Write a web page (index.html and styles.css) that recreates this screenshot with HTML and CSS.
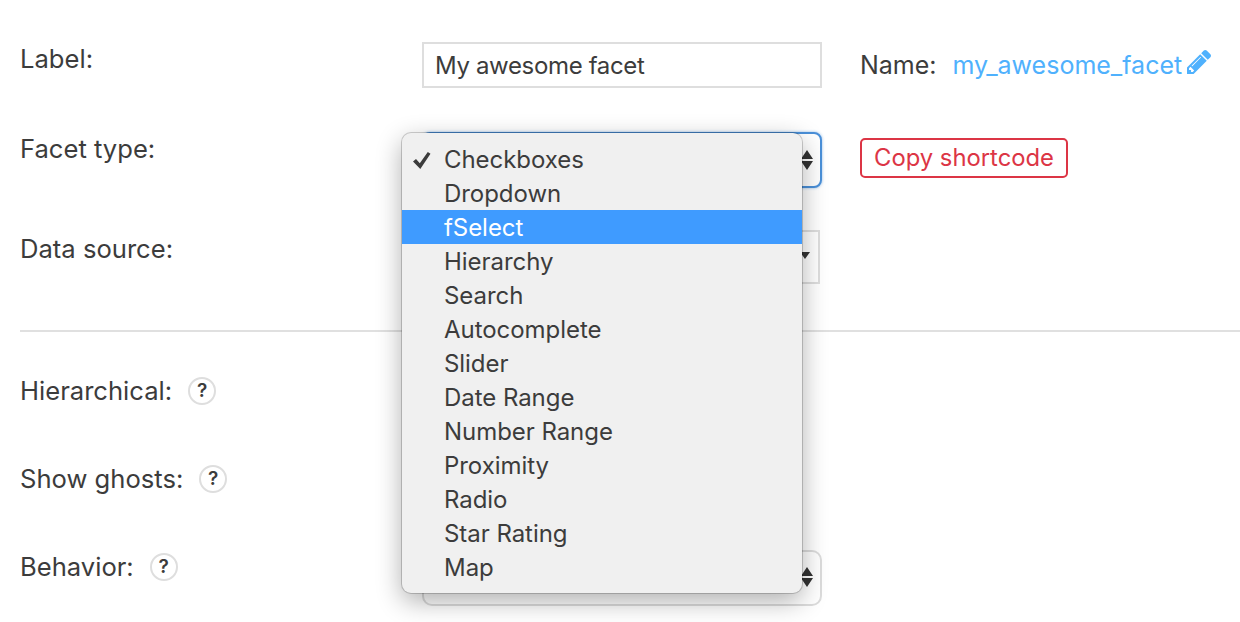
FILE: index.html
```html
<!DOCTYPE html>
<html lang="en">
<head>
<meta charset="utf-8">
<title>Facet settings</title>
<link rel="stylesheet" href="styles.css">
</head>
<body>
<main class="page">
  <section class="group group-top">
    <div class="row row-label">
      <div class="label">Label:</div>
      <div class="input">My awesome facet</div>
      <div class="side side-name">
        <span>Name:</span>
        <a class="name-link">my_awesome_facet</a>
        <svg class="pencil" viewBox="128 149 1515 1515" aria-hidden="true"><path d="M491 1536l91-91-235-235-91 91v107h128v128h107zm523-928q0-22-22-22-10 0-17 7l-542 542q-7 7-7 17 0 22 22 22 10 0 17-7l542-542q7-7 7-17zm-54-192l416 416-832 832h-416v-416zm683 96q0 53-37 90l-166 166-416-416 166-165q36-38 90-38 53 0 91 38l235 234q37 39 37 91z"/></svg>
      </div>
    </div>
    <div class="row row-type">
      <div class="label">Facet type:</div>
      <div class="select select-focus">
        <svg class="updown" viewBox="0 0 12 20" aria-hidden="true"><path d="M6 0l6 9h-12zM0 11h12l-6 9z"/></svg>
      </div>
      <div class="side side-copy"><button class="copy">Copy shortcode</button></div>
    </div>
    <div class="row row-source">
      <div class="label label-source">Data source:</div>
      <div class="select-flat"><span class="caret"></span></div>
    </div>
  </section>
  <hr class="divider">
  <section class="group">
    <div class="row row-opt">
      <div class="label label-help">Hierarchical:<span class="help">?</span></div>
    </div>
    <div class="row row-opt">
      <div class="label label-help">Show ghosts:<span class="help">?</span></div>
    </div>
    <div class="row row-opt">
      <div class="label label-help">Behavior:<span class="help">?</span></div>
      <div class="select select-plain">
        <svg class="updown" viewBox="0 0 12 20" aria-hidden="true"><path d="M6 0l6 9h-12zM0 11h12l-6 9z"/></svg>
      </div>
    </div>
  </section>
  <ul class="menu">
    <li class="item checked"><svg class="check" viewBox="0 0 18 17" aria-hidden="true"><path d="M0 9.500l3-2.400 3.800 4.100L14.800 0l2.700 1.700L7.300 17z"/></svg>Checkboxes</li>
    <li class="item">Dropdown</li>
    <li class="item active">fSelect</li>
    <li class="item">Hierarchy</li>
    <li class="item">Search</li>
    <li class="item">Autocomplete</li>
    <li class="item">Slider</li>
    <li class="item">Date Range</li>
    <li class="item">Number Range</li>
    <li class="item">Proximity</li>
    <li class="item">Radio</li>
    <li class="item">Star Rating</li>
    <li class="item">Map</li>
  </ul>
</main>
</body>
</html>
```
FILE: styles.css
```css
* { box-sizing: border-box; }
html, body { margin: 0; height: 100%; background: #fff; overflow: hidden; }
body { font-family: Inter, "Liberation Sans", Arial, sans-serif; font-size: 24px; color: #3c3c3c; }
.page { position: relative; height: 622px; padding-top: 42px; }
.group { padding-left: 20px; }
.row { display: flex; align-items: flex-start; }
.label { width: 402px; flex: none; font-size: 25.6px; line-height: 34px; }
.label-source { padding-top: 2px; }
.label-help { display: flex; align-items: center; }
.row-label { height: 46px; }
.row-type { height: 56px; margin-top: 44px; }
.row-source { height: 54px; margin-top: 42px; }
.row-opt { height: 34px; margin-top: 54px; }
.row-opt:first-child { margin-top: 0; }
.row-opt:last-child { height: 56px; }
.row-opt:last-child .label { height: 34px; }
.input { width: 400px; height: 46px; line-height: 43px; padding-left: 11px; border: 2px solid #dedede; letter-spacing: -0.35px; }
.side { margin-left: 38px; }
.side-name { display: flex; align-items: flex-start; font-size: 25px; line-height: 47px; white-space: nowrap; }
.name-link { margin-left: 16px; color: #4fb1fd; }
.pencil { width: 24px; height: 24px; margin: 8px 0 0 5px; fill: #4fb1fd; }
.select { position: relative; width: 400px; height: 56px; background: #fff; }
.select-focus { border: 2px solid #4a90d9; border-radius: 8px; box-shadow: 0 0 3px rgba(74,144,217,.6); }
.select-plain { border: 2px solid #dcdcdc; border-radius: 10px; }
.updown { position: absolute; right: 7px; top: 16px; width: 12px; height: 20px; fill: #333; }
.select-plain .updown { top: 15px; }
.select-flat { position: relative; width: 398px; height: 54px; border: 2px solid #dedede; }
.caret { position: absolute; right: 8px; top: 20px; border: 5px solid transparent; border-top: 7px solid #333; border-bottom: 0; }
.side-copy { margin-top: 6px; }
.copy { display: block; height: 40px; width: 208px; padding: 0 0 2px; font: inherit; font-size: 23.8px; color: #dc3545; background: #fff; border: 2px solid #dc3545; border-radius: 5px; }
.divider { height: 2px; margin: 46px 0 42px 20px; border: 0; background: #e0e0e0; }
.help { display: flex; align-items: center; justify-content: center; width: 28px; height: 28px; margin-left: 16px; border: 2px solid #dedede; border-radius: 50%; font-size: 19px; font-weight: 600; }
.menu { position: absolute; left: 402px; top: 133px; width: 400px; height: 460px; margin: 0; padding: 9px 0 8px; list-style: none; background: #f0f0f0; border-radius: 9px; box-shadow: 0 0 0 1px rgba(0,0,0,.18), 0 8px 26px rgba(0,0,0,.32); }
.item { position: relative; height: 34px; line-height: 36px; padding-left: 42px; letter-spacing: -0.05px; }
.active { background: #3f9bff; color: #fff; }
.check { position: absolute; left: 11px; top: 10px; width: 18px; height: 17px; fill: #3c3c3c; }
```
